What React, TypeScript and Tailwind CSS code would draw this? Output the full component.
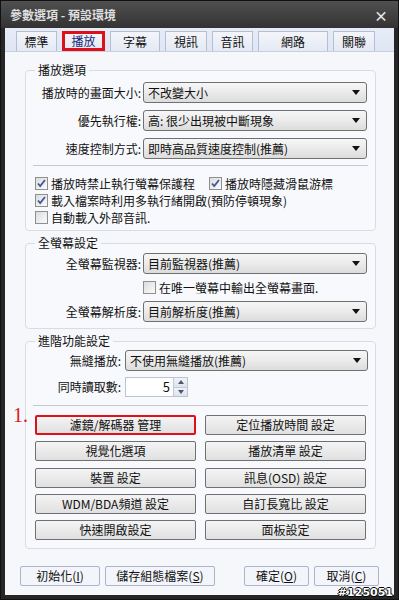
import React from "react";

const Arrow = () => (
      <svg width="8" height="5" viewBox="0 0 8 5" className="shrink-0">
            <path d="M0 0h8L4 5z" fill="#111" />
      </svg>
);

function Select({ value, className = "" }: { value: string; className?: string }) {
      return (
            <div
                  className={`h-[21px] flex items-center justify-between pl-[4px] pr-[6px] border border-[#707070] rounded-[3px] bg-gradient-to-b from-[#f6f6f6] via-[#ebebeb] to-[#dcdcdc] ${className}`}
            >
                  <span className="truncate">{value}</span>
                  <Arrow />
            </div>
      );
}

function Check({ checked, label }: { checked?: boolean; label: string }) {
      return (
            <div className="flex items-center h-[17px]">
                  <div className="w-[13px] h-[13px] border border-[#8e8f8f] bg-gradient-to-br from-[#dcdcdc] to-[#fbfbfb] flex items-center justify-center shrink-0">
                        {checked && (
                              <svg width="9" height="9" viewBox="0 0 9 9">
                                    <path d="M1 4.5l2.2 2.5L8 1" stroke="#3d5a96" strokeWidth="1.8" fill="none" />
                              </svg>
                        )}
                  </div>
                  <span className="ml-[3px]">{label}</span>
            </div>
      );
}

function Btn({ label, active }: { label: string; active?: boolean }) {
      return (
            <div
                  className={`h-[20px] flex items-center justify-center rounded-[2px] bg-gradient-to-b from-[#f4f4f4] to-[#e0e0e0] ${
                        active ? "border-2 border-[#e0101a]" : "border border-[#707070]"
                  }`}
            >
                  {label}
            </div>
      );
}

function Group({ title, children, className = "" }: { title: string; children: React.ReactNode; className?: string }) {
      return (
            <fieldset className={`border border-[#d8dce4] rounded-[4px] bg-[#f8f9fc] px-[7px] ${className}`}>
                  <legend className="ml-[2px] px-[3px] leading-[16px]">{title}</legend>
                  {children}
            </fieldset>
      );
}

const tabs = [
      { name: "標準", w: "w-[41px]" },
      { name: "播放", w: "w-[43px]", active: true },
      { name: "字幕", w: "w-[50px]" },
      { name: "視訊", w: "w-[42px]" },
      { name: "音訊", w: "w-[41px]" },
      { name: "網路", w: "w-[70px]" },
      { name: "關聯", w: "w-[42px]" },
];

const buttons = [
      ["濾鏡/解碼器 管理", "定位播放時間 設定"],
      ["視覺化選項", "播放清單 設定"],
      ["裝置 設定", "訊息(OSD) 設定"],
      ["WDM/BDA頻道 設定", "自訂長寬比 設定"],
      ["快速開啟設定", "面板設定"],
];

function FootBtn({ text, k, w }: { text: string; k: string; w: string }) {
      return (
            <div className={`${w} h-[20px] flex items-center justify-center border border-[#a9b5cc] rounded-[2px] bg-[#f3f5fa]`}>
                  {text}(<span className="underline">{k}</span>)
            </div>
      );
}

export default function App() {
      return (
            <div className="relative w-[399px] h-[600px] bg-[#262626] flex flex-col text-[12px] text-[#111] font-['Noto_Sans_CJK_TC','Liberation_Sans',sans-serif] border border-[#111]">
                  <div className="h-[27px] flex items-center justify-between pl-[9px] pr-[10px] bg-gradient-to-b from-[#505050] to-[#333333] shrink-0">
                        <span className="text-[#dedede] font-bold text-[12px]">參數選項 - 預設環境</span>
                        <span className="text-[#e8e8e8] font-bold text-[14px] leading-none">×</span>
                  </div>

                  <div className="flex-1 mx-[4px] mb-[4px] bg-[#f5f7fb] flex flex-col">
                        <div className="h-[24px] shrink-0 flex items-end gap-[5px] pl-[11px] bg-gradient-to-b from-[#e7ecf7] to-[#dfe6f4] border-b border-[#c7cfdd]">
                              {tabs.map((t) => (
                                    <div
                                          key={t.name}
                                          className={`${t.w} h-[20px] flex items-center justify-center border bg-gradient-to-b from-[#f3f5fa] to-[#e4e9f3] ${
                                                t.active ? "border-[3px] border-[#e0101a] text-[#1d2a7a]" : "border-[#b4bfd3] border-b-0"
                                          }`}
                                    >
                                          {t.name}
                                    </div>
                              ))}
                        </div>

                        <div className="flex flex-col pl-[20px] pr-[18px] pt-[10px]">
                              <Group title="播放選項" className="pb-[4px]">
                                    <div className="flex flex-col gap-[7px] pt-[4px]">
                                          {[
                                                ["播放時的畫面大小:", "不改變大小"],
                                                ["優先執行權:", "高: 很少出現被中斷現象"],
                                                ["速度控制方式:", "即時高品質速度控制(推薦)"],
                                          ].map(([l, v]) => (
                                                <div key={l} className="flex items-center">
                                                      <span className="w-[108px] text-right">{l}</span>
                                                      <Select value={v} className="flex-1 ml-[2px] mr-[1px]" />
                                                </div>
                                          ))}
                                    </div>
                                    <div className="h-px bg-[#c4c8d0] mt-[6px] mb-[9px]" />
                                    <div className="pl-[2px]">
                                          <div className="flex">
                                                <div className="w-[174px]">
                                                      <Check checked label="播放時禁止執行螢幕保護程" />
                                                </div>
                                                <Check checked label="播放時隱藏滑鼠游標" />
                                          </div>
                                          <Check checked label="載入檔案時利用多執行緒開啟(預防停頓現象)" />
                                          <Check label="自動載入外部音訊." />
                                    </div>
                              </Group>

                              <Group title="全螢幕設定" className="mt-[4px] pb-[6px]">
                                    <div className="flex items-center pt-[2px]">
                                          <span className="w-[108px] text-right">全螢幕監視器:</span>
                                          <Select value="目前監視器(推薦)" className="flex-1 ml-[2px] mr-[1px]" />
                                    </div>
                                    <div className="pl-[110px] my-[5px]">
                                          <Check label="在唯一螢幕中輸出全螢幕畫面." />
                                    </div>
                                    <div className="flex items-center">
                                          <span className="w-[108px] text-right">全螢幕解析度:</span>
                                          <Select value="目前解析度(推薦)" className="flex-1 ml-[2px] mr-[1px]" />
                                    </div>
                              </Group>

                              <Group title="進階功能設定" className="mt-[4px] pb-[8px]">
                                    <div className="flex items-center pt-[1px]">
                                          <span className="w-[88px] text-right">無縫播放:</span>
                                          <Select value="不使用無縫播放(推薦)" className="flex-1 ml-[4px]" />
                                    </div>
                                    <div className="flex items-center mt-[6px]">
                                          <span className="w-[88px] text-right">同時讀取數:</span>
                                          <div className="ml-[4px] w-[63px] h-[20px] flex border border-[#bcc3cf] bg-white">
                                                <span className="flex-1 text-right pr-[3px] leading-[18px] text-[13px]">5</span>
                                                <div className="w-[14px] flex flex-col border-l border-[#c3cad6]">
                                                      <div className="flex-1 flex items-center justify-center bg-gradient-to-b from-[#f1f3f8] to-[#dde3ee] border-b border-[#c3cad6]">
                                                            <svg width="6" height="4" viewBox="0 0 6 4"><path d="M0 4L3 0l3 4z" fill="#4c5670" /></svg>
                                                      </div>
                                                      <div className="flex-1 flex items-center justify-center bg-gradient-to-b from-[#f1f3f8] to-[#dde3ee]">
                                                            <svg width="6" height="4" viewBox="0 0 6 4"><path d="M0 0h6L3 4z" fill="#4c5670" /></svg>
                                                      </div>
                                                </div>
                                          </div>
                                    </div>
                                    <div className="h-px bg-[#c4c8d0] mt-[8px] mb-[9px]" />
                                    <div className="grid grid-cols-2 gap-x-[9px] gap-y-[6.3px] pl-[2px] pr-[2px]">
                                          {buttons.map(([a, b], i) => (
                                                <React.Fragment key={a}>
                                                      <Btn label={a} active={i === 0} />
                                                      <Btn label={b} />
                                                </React.Fragment>
                                          ))}
                                    </div>
                              </Group>
                        </div>

                        <div className="flex items-center mt-[17px] pl-[15px] pr-[15px]">
                              <FootBtn text="初始化" k="I" w="w-[80px]" />
                              <FootBtn text="儲存組態檔案" k="S" w="w-[110px] ml-[5px]" />
                              <div className="flex-1" />
                              <FootBtn text="確定" k="O" w="w-[65px]" />
                              <FootBtn text="取消" k="C" w="w-[65px] ml-[5px]" />
                        </div>
                  </div>

                  <span className="absolute left-[12px] top-[404px] text-[20px] leading-none text-[#e0151d] font-['Liberation_Serif',serif]">1.</span>
                  <span className="absolute right-[5px] bottom-[1px] text-[11px] font-bold leading-none text-white font-['DejaVu_Sans',sans-serif] [text-shadow:1px_0_0_#000,-1px_0_0_#000,0_1px_0_#000,0_-1px_0_#000]">
                        #125051
                  </span>
            </div>
      );
}
